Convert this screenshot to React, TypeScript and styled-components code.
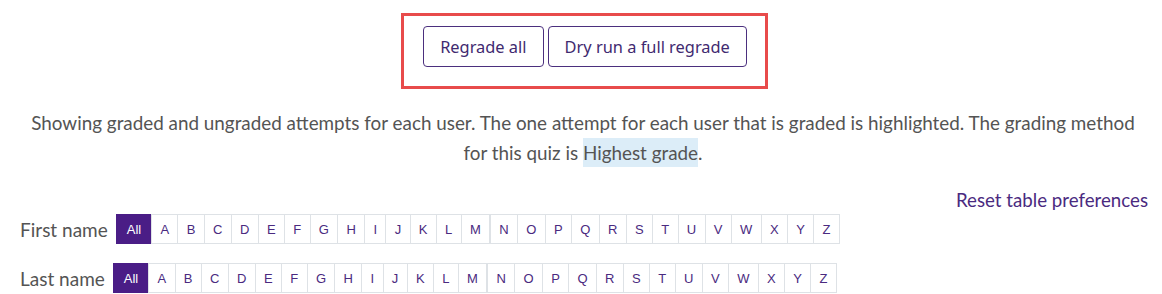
import React from "react";
import styled, { createGlobalStyle } from "styled-components";

const Global = createGlobalStyle`
  html, body { margin: 0; padding: 0; background: #fff; }
  body { font-family: Lato, "Noto Sans", sans-serif; color: #545454; }
`;

const Page = styled.div`
  width: 1162px;
  box-sizing: border-box;
  padding: 13px 14px 0 20px;
  display: flex;
  flex-direction: column;
`;

const Highlight = styled.div`
  align-self: center;
  margin-left: 1px;
  display: flex;
  gap: 4px;
  border: 3px solid #e84b4b;
  padding: 10px 18px 19px 19px;
`;

const OutlineButton = styled.button`
  height: 41px;
  padding: 0 16px;
  background: #fff;
  border: 1px solid #4b2f7e;
  border-radius: 4px;
  color: #3f2a70;
  font-family: "Noto Sans", sans-serif;
  font-size: 16.4px;
  cursor: pointer;
`;

const Info = styled.p`
  margin: 19px 0 0 0;
  padding: 0 2px 0 0;
  text-align: center;
  font-size: 18.85px;
  line-height: 30px;
  color: #545454;
`;

const Mark = styled.span`
  background: #dcedf8;
  padding: 3px 0;
`;

const ResetRow = styled.div`
  display: flex;
  justify-content: flex-end;
  margin-top: 20px;
`;

const ResetLink = styled.a`
  font-size: 18.7px;
  color: #4a2a80;
  text-decoration: none;
  line-height: 24px;
`;

const FilterRow = styled.div<{ $mt: number }>`
  display: flex;
  align-items: center;
  gap: 8px;
  margin-top: ${(p) => p.$mt}px;
`;

const Label = styled.span`
  font-size: 19px;
  color: #545454;
`;

const Letters = styled.div`
  display: flex;
`;

const Letter = styled.a<{ $active?: boolean; $split?: boolean }>`
  height: 30px;
  box-sizing: border-box;
  display: flex;
  align-items: center;
  justify-content: center;
  padding: 0 ${(p) => (p.$active ? 10 : 8.3)}px;
  margin-left: ${(p) => (p.$split ? 0 : -1)}px;
  border: 1px solid ${(p) => (p.$active ? "#4a1d86" : "#dee2e6")};
  background: ${(p) => (p.$active ? "#4a1d86" : "#fff")};
  color: ${(p) => (p.$active ? "#fff" : "#4a2a80")};
  font-family: "Liberation Sans", Arial, sans-serif;
  font-size: 13px;
  &:first-child { margin-left: 0; }
`;

const ALPHA = "ABCDEFGHIJKLMNOPQRSTUVWXYZ".split("");

function Initials({ label, mt }: { label: string; mt: number }) {
  return (
    <FilterRow $mt={mt}>
      <Label>{label}</Label>
      <Letters>
        <Letter $active>All</Letter>
        {ALPHA.map((c) => (
          <Letter key={c} $split={c === "N"}>
            {c}
          </Letter>
        ))}
      </Letters>
    </FilterRow>
  );
}

export default function App() {
  return (
    <>
      <Global />
      <Page>
        <Highlight>
          <OutlineButton>Regrade all</OutlineButton>
          <OutlineButton>Dry run a full regrade</OutlineButton>
        </Highlight>
        <Info>
          Showing graded and ungraded attempts for each user. The one attempt for each user that is graded is highlighted. The grading method
          <br />
          for this quiz is <Mark>Highest grade</Mark>.
        </Info>
        <ResetRow>
          <ResetLink href="#">Reset table preferences</ResetLink>
        </ResetRow>
        <Initials label="First name" mt={2} />
        <Initials label="Last name" mt={19} />
      </Page>
    </>
  );
}
